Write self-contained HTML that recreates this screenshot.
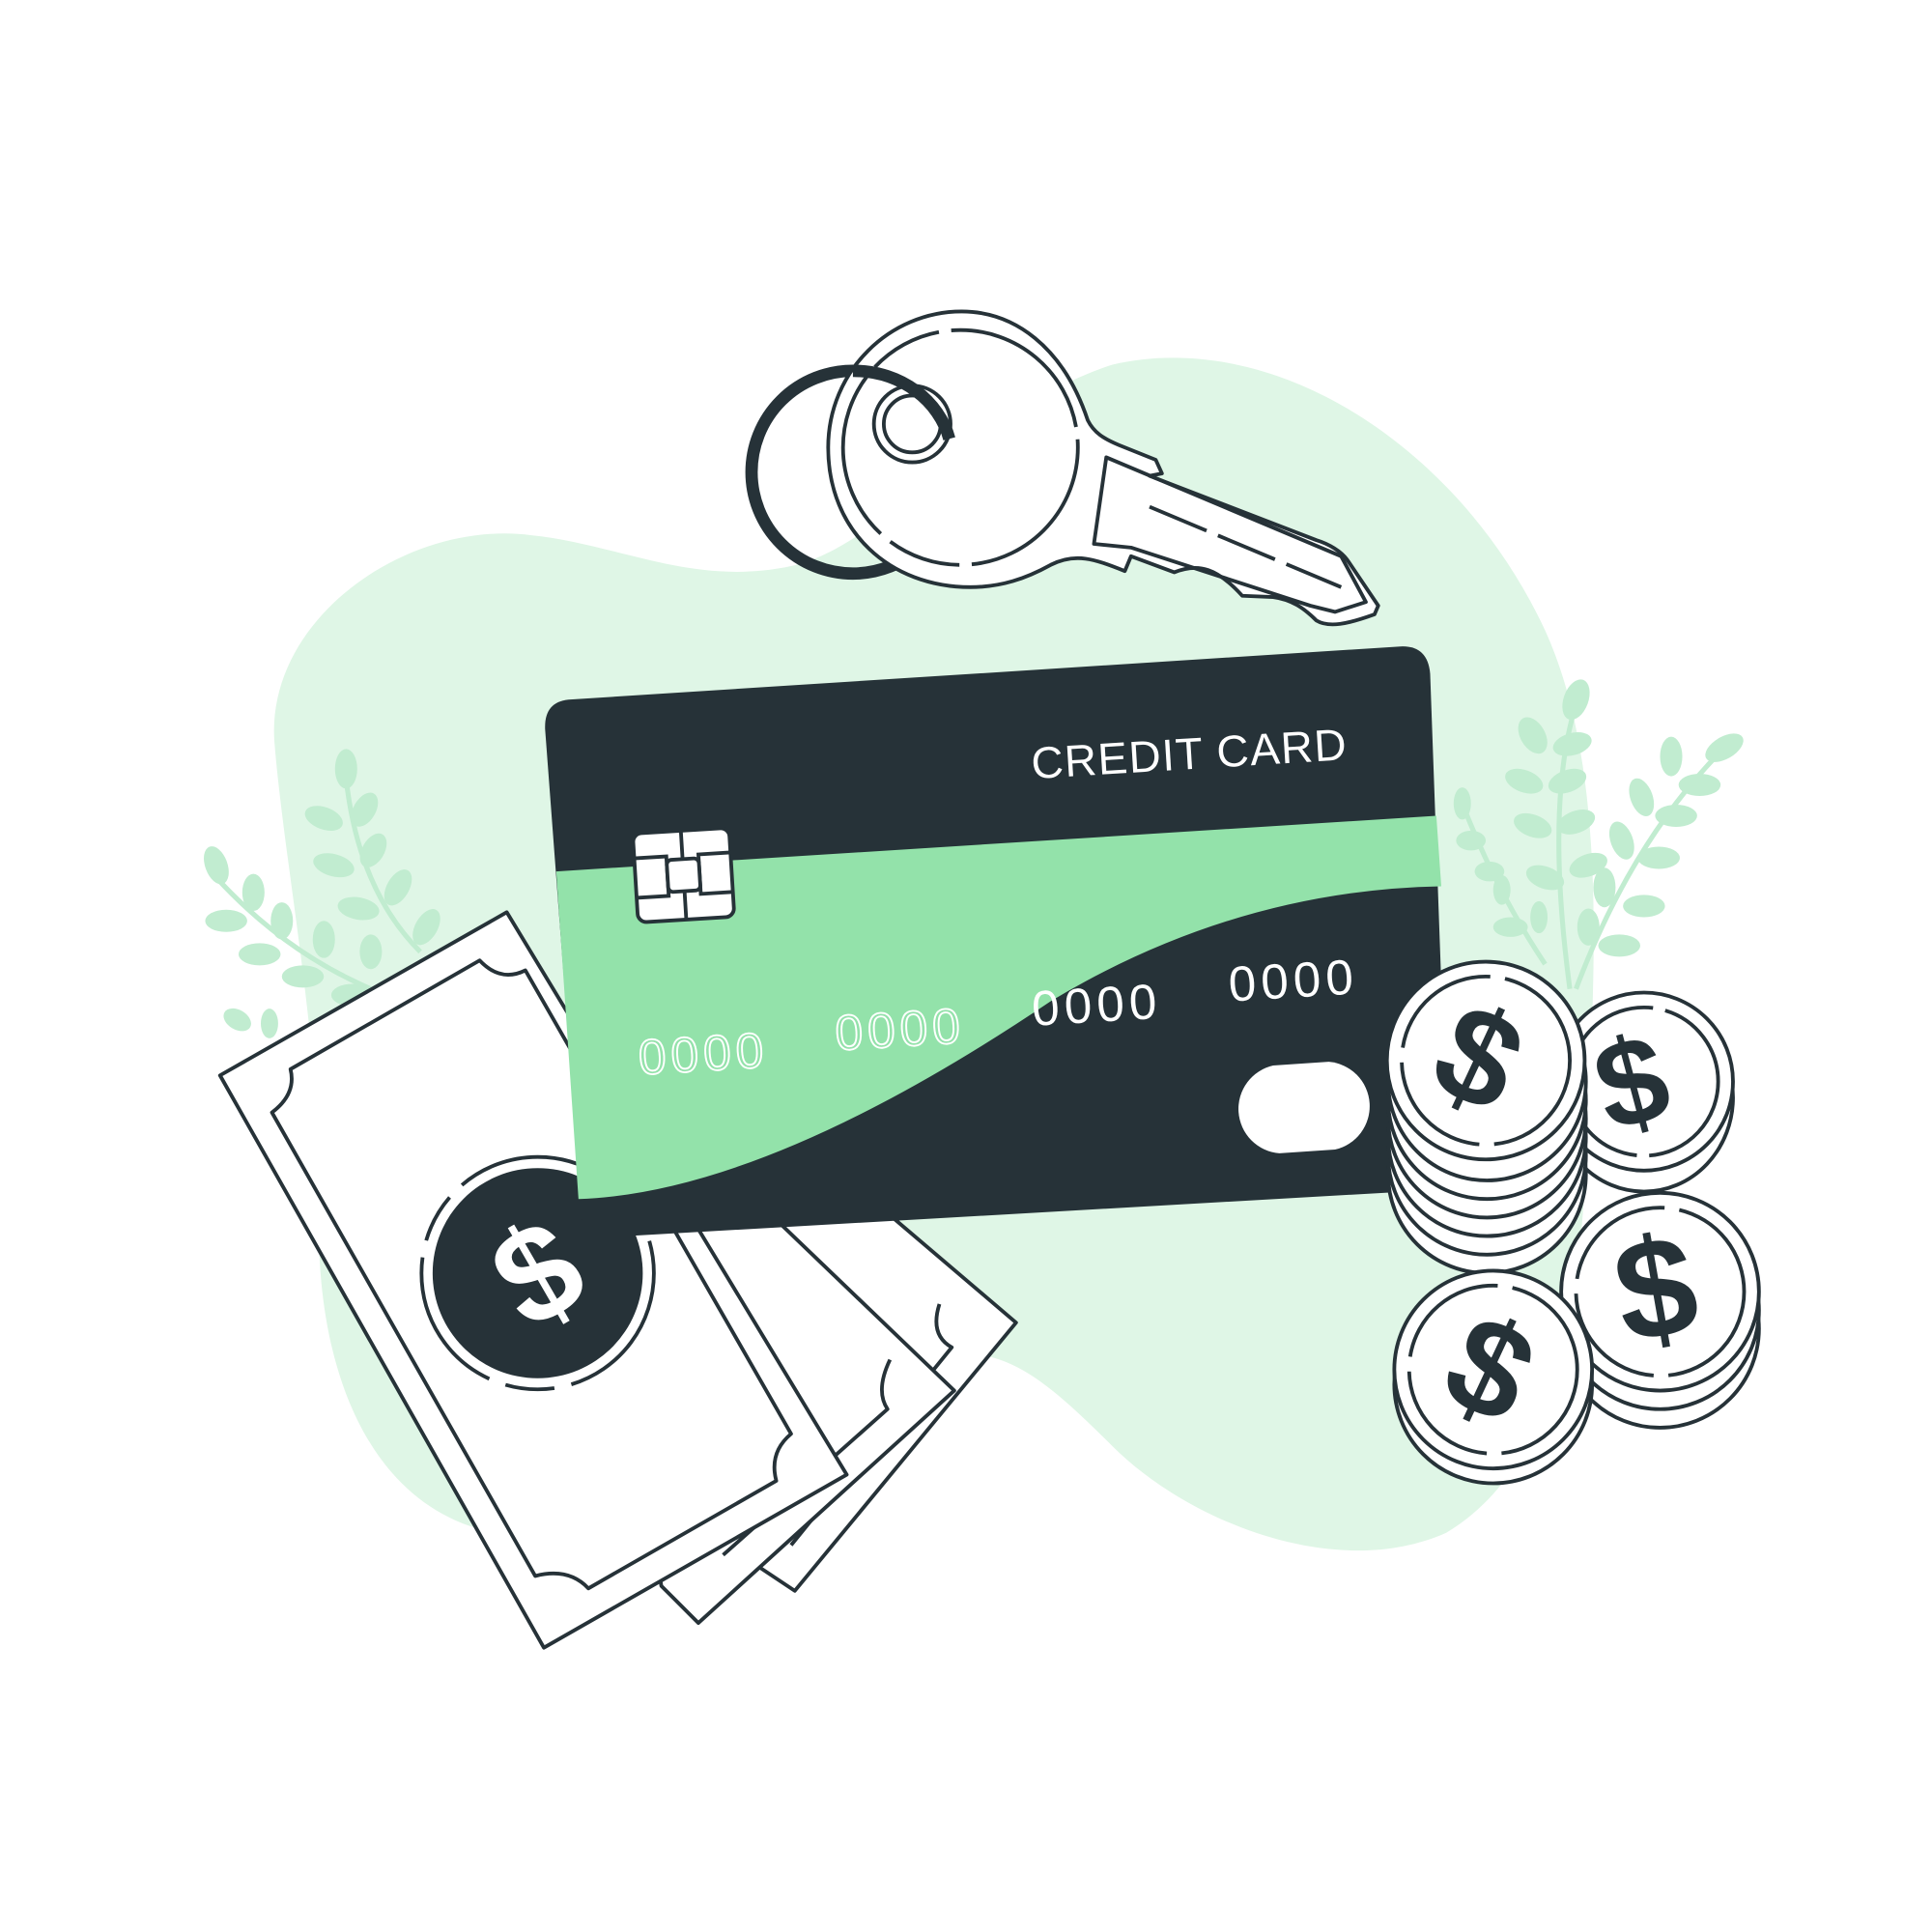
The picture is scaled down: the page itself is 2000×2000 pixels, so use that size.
<!DOCTYPE html>
<html><head><meta charset="utf-8"><style>
html,body{margin:0;padding:0;background:#fff}
svg{display:block}
text{font-family:"Liberation Sans",sans-serif}
</style></head><body>
<svg width="2000" height="2000" viewBox="0 0 1563 1563" xmlns="http://www.w3.org/2000/svg">
<path d="M222,600 C215,500 330,420 430,433 C500,440 560,475 640,458 C720,440 790,330 900,295 C1030,265 1180,360 1250,510 C1300,620 1290,780 1285,900 C1280,1030 1270,1180 1170,1240 C1080,1280 960,1230 900,1170 C830,1100 800,1080 720,1105 C620,1140 520,1260 400,1240 C300,1220 255,1110 258,980 C262,860 230,700 222,600 Z" fill="#dff6e6"/>
<g fill="#c1ecd0">
<ellipse cx="280" cy="622" rx="9" ry="16"/>
<ellipse cx="262" cy="662" rx="16" ry="9" transform="rotate(20 262 662)"/>
<ellipse cx="295" cy="655" rx="9" ry="15" transform="rotate(30 295 655)"/>
<ellipse cx="270" cy="700" rx="17" ry="9" transform="rotate(15 270 700)"/>
<ellipse cx="302" cy="688" rx="9" ry="15" transform="rotate(30 302 688)"/>
<ellipse cx="290" cy="735" rx="17" ry="9" transform="rotate(10 290 735)"/>
<ellipse cx="322" cy="718" rx="9" ry="16" transform="rotate(30 322 718)"/>
<ellipse cx="345" cy="750" rx="9" ry="16" transform="rotate(30 345 750)"/>
<ellipse cx="175" cy="700" rx="9" ry="16" transform="rotate(-20 175 700)"/>
<ellipse cx="183" cy="745" rx="17" ry="9"/>
<ellipse cx="205" cy="722" rx="9" ry="15"/>
<ellipse cx="210" cy="772" rx="17" ry="9"/>
<ellipse cx="228" cy="745" rx="9" ry="15"/>
<ellipse cx="245" cy="790" rx="17" ry="9"/>
<ellipse cx="262" cy="760" rx="9" ry="15"/>
<ellipse cx="300" cy="770" rx="9" ry="14"/>
<ellipse cx="192" cy="825" rx="12" ry="8" transform="rotate(30 192 825)"/>
<ellipse cx="218" cy="828" rx="7" ry="12"/>
<ellipse cx="285" cy="805" rx="17" ry="9"/>
<ellipse cx="1275" cy="566" rx="10" ry="17" transform="rotate(20 1275 566)"/>
<ellipse cx="1240" cy="595" rx="10" ry="16" transform="rotate(-30 1240 595)"/>
<ellipse cx="1272" cy="602" rx="16" ry="9" transform="rotate(-15 1272 602)"/>
<ellipse cx="1233" cy="632" rx="16" ry="9" transform="rotate(20 1233 632)"/>
<ellipse cx="1268" cy="632" rx="16" ry="9" transform="rotate(-20 1268 632)"/>
<ellipse cx="1240" cy="668" rx="16" ry="9" transform="rotate(20 1240 668)"/>
<ellipse cx="1275" cy="665" rx="16" ry="9" transform="rotate(-20 1275 665)"/>
<ellipse cx="1250" cy="710" rx="16" ry="9" transform="rotate(20 1250 710)"/>
<ellipse cx="1285" cy="700" rx="16" ry="9" transform="rotate(-20 1285 700)"/>
<ellipse cx="1395" cy="605" rx="17" ry="9" transform="rotate(-30 1395 605)"/>
<ellipse cx="1352" cy="612" rx="9" ry="16"/>
<ellipse cx="1375" cy="635" rx="17" ry="9"/>
<ellipse cx="1328" cy="645" rx="9" ry="16" transform="rotate(-20 1328 645)"/>
<ellipse cx="1356" cy="660" rx="17" ry="9"/>
<ellipse cx="1312" cy="680" rx="9" ry="16" transform="rotate(-20 1312 680)"/>
<ellipse cx="1342" cy="694" rx="17" ry="9"/>
<ellipse cx="1298" cy="718" rx="9" ry="16"/>
<ellipse cx="1330" cy="733" rx="17" ry="9"/>
<ellipse cx="1310" cy="765" rx="17" ry="9"/>
<ellipse cx="1285" cy="750" rx="9" ry="15"/>
<ellipse cx="1183" cy="650" rx="7" ry="13"/>
<ellipse cx="1190" cy="680" rx="12" ry="8"/>
<ellipse cx="1205" cy="705" rx="12" ry="8"/>
<ellipse cx="1215" cy="720" rx="7" ry="12"/>
<ellipse cx="1222" cy="750" rx="14" ry="8"/>
<ellipse cx="1245" cy="742" rx="7" ry="13"/>
</g>
<g stroke="#c1ecd0" stroke-width="4" fill="none">
<path d="M280,630 Q290,720 340,770"/><path d="M175,710 Q230,770 300,800"/>
<path d="M1275,570 Q1250,650 1270,800"/><path d="M1395,605 Q1320,680 1275,800"/>
<path d="M1183,650 Q1210,720 1250,780"/>
</g>
<g fill="#fff" stroke="#263238" stroke-width="3" stroke-linejoin="round">
<path d="M610,1265 L643,1287 L822,1070 L640,915 L560,1000 Z"/>
<path d="M760,1055 Q752,1080 770,1090 L640,1250"/>
<path d="M535,1283 L565,1313 L772,1125 L600,960 L500,1060 Z"/>
<path d="M720,1100 Q708,1125 718,1140 L585,1258"/>
<path d="M410,738 L685,1193 L440,1333 L178,870 Z"/>
<path d="M220,900 Q240,885 235,865 L388,777 Q405,795 425,785 L640,1160 Q622,1175 628,1198 L476,1285 Q460,1268 433,1275 Z"/>
</g>
<circle cx="435" cy="1030" r="85" fill="#263238"/>
<circle cx="435" cy="1030" r="94" fill="none" stroke="#263238" stroke-width="3" stroke-dasharray="120 14 40 14"/>
<text x="435" y="1068" font-size="110" font-weight="bold" fill="#fff" text-anchor="middle" transform="rotate(-30 435 1030)">$</text>
<path d="M460,566 L1133,523 Q1155,522 1157,545 L1172,962 L472,1002 L441,590 Q440,568 460,566 Z" fill="#263238"/>
<path d="M450,705 L1162,660 L1166,717 Q1000,720 850,810 Q620,965 468,970 Z" fill="#93e2aa"/>
<text x="835" y="630" font-size="36" letter-spacing="1" fill="#fff" transform="rotate(-3.5 835 630)">CREDIT CARD</text>
<g font-size="40" letter-spacing="4" transform="rotate(-3.5 800 820)">
<text x="515" y="852" fill="none" stroke="#fff" stroke-width="1.5">0000</text>
<text x="675" y="842" fill="none" stroke="#fff" stroke-width="1.5">0000</text>
<text x="835" y="832" fill="#fff">0000</text>
<text x="995" y="822" fill="#fff">0000</text>
</g>
<g transform="rotate(-3.5 553 708)">
<rect x="514" y="672" width="78" height="72" rx="7" fill="#fff" stroke="#263238" stroke-width="3"/>
<path d="M514,692 H540 V724 H514 M592,692 H566 V724 H592 M540,708 H566 M553,672 V695 M553,721 V744" stroke="#263238" stroke-width="3" fill="none"/>
<rect x="540" y="695" width="26" height="26" rx="4" fill="#fff" stroke="#263238" stroke-width="3"/>
</g>
<path d="M1030,862 L1075,859 A36,36 0 0 1 1080,930 L1035,933 A36,36 0 0 1 1030,862 Z" fill="#fff"/>
<circle cx="690" cy="382" r="82" fill="none" stroke="#263238" stroke-width="10"/>
<g fill="#fff" stroke="#263238" stroke-width="3" stroke-linejoin="round">
<path d="M880,340 C860,280 820,252 778,252 C720,252 670,300 670,362 C670,430 720,475 785,475 C810,475 830,468 850,457 C870,447 885,452 910,462 L915,450 L950,463 C970,455 985,460 1005,482 L1030,483 C1045,485 1055,492 1065,502 C1075,508 1090,505 1112,497 L1115,490 L1090,453 C1085,446 1075,440 1065,437 L930,385 L940,383 L935,372 L905,360 C893,355 885,350 880,340 Z"/>
<circle cx="777" cy="362" r="95" fill="none" stroke-dasharray="140 10 60 10"/>
<circle cx="738" cy="343" r="31"/>
<circle cx="738" cy="343" r="23" fill="none"/>
<path d="M895,370 L1085,450 L1105,487 L1080,495 L1060,490 L915,443 L885,440 Z" fill="none"/>
</g>
<path d="M930,410 L1085,475" stroke="#263238" stroke-width="3" stroke-dasharray="50 10"/>
<path d="M690,300 C730,300 760,325 768,355" fill="none" stroke="#263238" stroke-width="10"/>
<g stroke="#263238" stroke-width="3" fill="#fff">
<g>
<ellipse cx="1330" cy="888" rx="72" ry="76"/>
<circle cx="1330" cy="875" r="72"/><circle cx="1330" cy="875" r="60" fill="none" stroke-dasharray="90 10"/>
<text x="1320" y="910" font-size="100" font-weight="bold" fill="#263238" stroke="none" text-anchor="middle" transform="rotate(-15 1320 875)">$</text>
</g>
<g>
<ellipse cx="1203" cy="950" rx="80" ry="80"/>
<ellipse cx="1203" cy="935" rx="80" ry="80"/>
<ellipse cx="1203" cy="920" rx="80" ry="80"/>
<ellipse cx="1203" cy="905" rx="80" ry="80"/>
<ellipse cx="1203" cy="890" rx="80" ry="80"/>
<ellipse cx="1203" cy="875" rx="80" ry="80"/>
<circle cx="1202" cy="858" r="80"/><circle cx="1202" cy="858" r="68" fill="none" stroke-dasharray="100 12"/>
<text x="1195" y="893" font-size="110" font-weight="bold" fill="#263238" stroke="none" text-anchor="middle" transform="rotate(25 1195 858)">$</text>
</g>
<g>
<ellipse cx="1343" cy="1075" rx="80" ry="80"/>
<ellipse cx="1343" cy="1060" rx="80" ry="80"/>
<circle cx="1343" cy="1045" r="80"/><circle cx="1343" cy="1045" r="68" fill="none" stroke-dasharray="100 12"/>
<text x="1340" y="1082" font-size="115" font-weight="bold" fill="#263238" stroke="none" text-anchor="middle" transform="rotate(-10 1340 1045)">$</text>
</g>
<g>
<ellipse cx="1208" cy="1120" rx="80" ry="80"/>
<circle cx="1208" cy="1108" r="80"/><circle cx="1208" cy="1108" r="68" fill="none" stroke-dasharray="100 12"/>
<text x="1205" y="1145" font-size="110" font-weight="bold" fill="#263238" stroke="none" text-anchor="middle" transform="rotate(25 1205 1108)">$</text>
</g>
</g>
</svg>
</body></html>
